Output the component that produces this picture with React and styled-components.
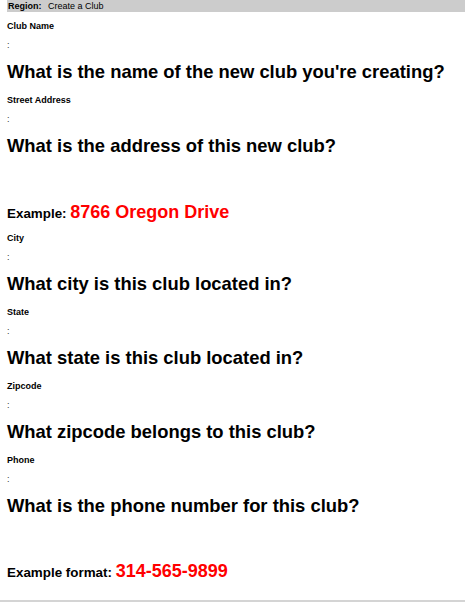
import React from 'react';
import styled, { createGlobalStyle } from 'styled-components';

const GlobalStyle = createGlobalStyle`
  html, body {
    margin: 0;
    padding: 0;
    background: #fff;
    font-family: "Liberation Sans", Arial, sans-serif;
    color: #000;
  }
`;

const Page = styled.div`
  width: 465px;
  height: 602px;
  box-sizing: border-box;
  padding-left: 7px;
  border-bottom: 2px solid #d4d4d4;
  overflow: hidden;
`;

const RegionBar = styled.div`
  background: #cccccc;
  height: 12px;
  line-height: 12px;
  font-size: 9px;
  padding-left: 1px;
`;

const RegionLabel = styled.b`
  margin-right: 4px;
`;

const Field = styled.div`
  display: flex;
  flex-direction: column;
`;

const FieldLabel = styled.div`
  font-size: 9px;
  font-weight: bold;
  line-height: 11px;
  margin-top: ${p => p.$top}px;
`;

const Colon = styled.div`
  font-size: 9px;
  line-height: 11px;
  margin-top: 8px;
  color: #333;
`;

const Question = styled.h2`
  font-size: 18.4px;
  font-weight: bold;
  line-height: 22px;
  margin: 10px 0 0;
`;

const Example = styled.div`
  font-size: 13.4px;
  font-weight: bold;
  line-height: 22px;
  margin-top: ${p => p.$top}px;
`;

const Red = styled.span`
  color: #ff0000;
  font-size: 18px;
`;

const fields = [
  { label: 'Club Name', question: "What is the name of the new club you're creating?" },
  { label: 'Street Address', question: 'What is the address of this new club?', example: ['Example: ', '8766 Oregon Drive'] },
  { label: 'City', question: 'What city is this club located in?' },
  { label: 'State', question: 'What state is this club located in?' },
  { label: 'Zipcode', question: 'What zipcode belongs to this club?' },
  { label: 'Phone', question: 'What is the phone number for this club?', example: ['Example format: ', '314-565-9899'] },
];

const App = () => {
  return (
    <>
      <GlobalStyle />
      <Page>
        <RegionBar>
          <RegionLabel>Region:</RegionLabel> Create a Club
        </RegionBar>
        {fields.map((f, i) => (
          <Field key={f.label}>
            <FieldLabel $top={i === 0 ? 9 : (fields[i - 1].example ? 8 : 12)}>{f.label}</FieldLabel>
            <Colon>:</Colon>
            <Question>{f.question}</Question>
            {f.example && (
              <Example $top={i === fields.length - 1 ? 43 : 44}>
                {f.example[0]}<Red>{f.example[1]}</Red>
              </Example>
            )}
          </Field>
        ))}
      </Page>
    </>
  );
};

export default App;
